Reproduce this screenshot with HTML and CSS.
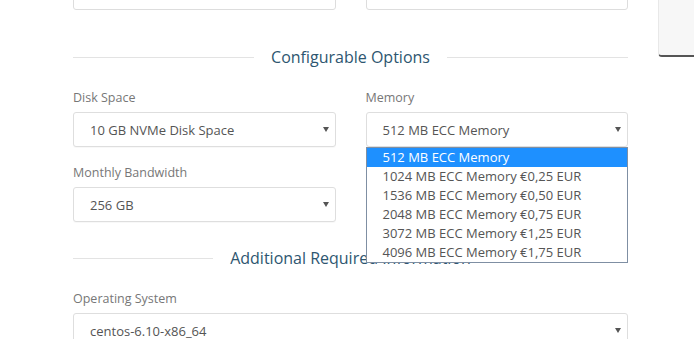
FILE: index.html
```html
<!DOCTYPE html>
<html>
<head>
<meta charset="utf-8">
<link rel="stylesheet" href="styles.css">
</head>
<body>
<div class="page">
  <div class="main">
    <div class="row">
      <div class="col"><div class="input"></div></div>
      <div class="col"><div class="input"></div></div>
    </div>

    <div class="heading heading-first">
      <span class="rule"></span>
      <span class="heading-text">Configurable Options</span>
      <span class="rule"></span>
    </div>

    <div class="row">
      <div class="col">
        <div class="label">Disk Space</div>
        <div class="select"><span>10 GB NVMe Disk Space</span><span class="caret"></span></div>
      </div>
      <div class="col">
        <div class="label">Memory</div>
        <div class="select-wrap">
          <div class="select"><span>512 MB ECC Memory</span><span class="caret"></span></div>
          <ul class="dropdown">
            <li class="active">512 MB ECC Memory</li>
            <li>1024 MB ECC Memory €0,25 EUR</li>
            <li>1536 MB ECC Memory €0,50 EUR</li>
            <li>2048 MB ECC Memory €0,75 EUR</li>
            <li>3072 MB ECC Memory €1,25 EUR</li>
            <li>4096 MB ECC Memory €1,75 EUR</li>
          </ul>
        </div>
      </div>
    </div>

    <div class="row row-next">
      <div class="col">
        <div class="label">Monthly Bandwidth</div>
        <div class="select"><span>256 GB</span><span class="caret"></span></div>
      </div>
      <div class="col">
        <div class="label">&nbsp;</div>
        <div class="select"><span></span><span class="caret"></span></div>
      </div>
    </div>

    <div class="heading heading-second">
      <span class="rule"></span>
      <span class="heading-text">Additional Required Information</span>
      <span class="rule"></span>
    </div>

    <div class="full">
      <div class="label">Operating System</div>
      <div class="select"><span>centos-6.10-x86_64</span><span class="caret"></span></div>
    </div>
  </div>
  <div class="sidebar"></div>
</div>
</body>
</html>
```
FILE: styles.css
```css
html, body {
  margin: 0;
  padding: 0;
  background: #ffffff;
  overflow: hidden;
}
body {
  font-family: "Open Sans", "DejaVu Sans", sans-serif;
  color: #555555;
}
.page {
  display: flex;
  align-items: flex-start;
}
.main {
  margin-left: 73px;
  width: 555px;
  margin-top: -25px;
  flex: none;
}
.sidebar {
  flex: none;
  margin-left: 30px;
  width: 60px;
  height: 55px;
  background: #f7f7f7;
  border-left: 1px solid #e8e8e8;
  border-bottom: 2px solid #555555;
  border-bottom-left-radius: 4px;
}
.row {
  display: flex;
  gap: 30px;
}
.col {
  flex: 1;
  min-width: 0;
}
.input {
  height: 33px;
  border: 1px solid #dddddd;
  border-radius: 3px;
  background: #fff;
}
.heading {
  display: flex;
  align-items: center;
  gap: 17px;
  height: 24px;
}
.heading-first {
  margin-top: 35px;
  margin-bottom: 18px;
}
.heading-second {
  margin-top: 24px;
  margin-bottom: 18px;
}
.rule {
  flex: 1;
  height: 1px;
  background: #e3e3e3;
}
.heading-text {
  font-size: 16px;
  line-height: 24px;
  color: #2e5670;
  white-space: nowrap;
}
.label {
  font-size: 12.5px;
  line-height: 20px;
  padding-top: 1px;
  color: #777777;
  margin-bottom: 4px;
}
.select {
  height: 33px;
  border: 1px solid #dedede;
  border-radius: 3px;
  background: #fff;
  display: flex;
  align-items: center;
  justify-content: space-between;
  padding: 0 6px 0 16px;
  font-size: 13px;
  color: #555555;
  box-shadow: 0 1px 1px rgba(0,0,0,0.03);
}
.caret {
  width: 0;
  height: 0;
  border-left: 3px solid transparent;
  border-right: 3px solid transparent;
  border-top: 5px solid #555555;
  margin-top: -1px;
}
.row-next {
  margin-top: 15px;
}
.select-wrap {
  position: relative;
}
.dropdown {
  position: absolute;
  left: 0;
  top: 100%;
  width: 260px;
  margin: 0;
  padding: 0;
  list-style: none;
  background: #ffffff;
  border: 1px solid #7f8fa3;
  z-index: 5;
}
.dropdown li {
  height: 19px;
  line-height: 19px;
  font-size: 13px;
  padding-left: 16px;
  color: #555555;
  white-space: nowrap;
}
.dropdown li.active {
  background: #1e90ff;
  color: #ffffff;
}
```
